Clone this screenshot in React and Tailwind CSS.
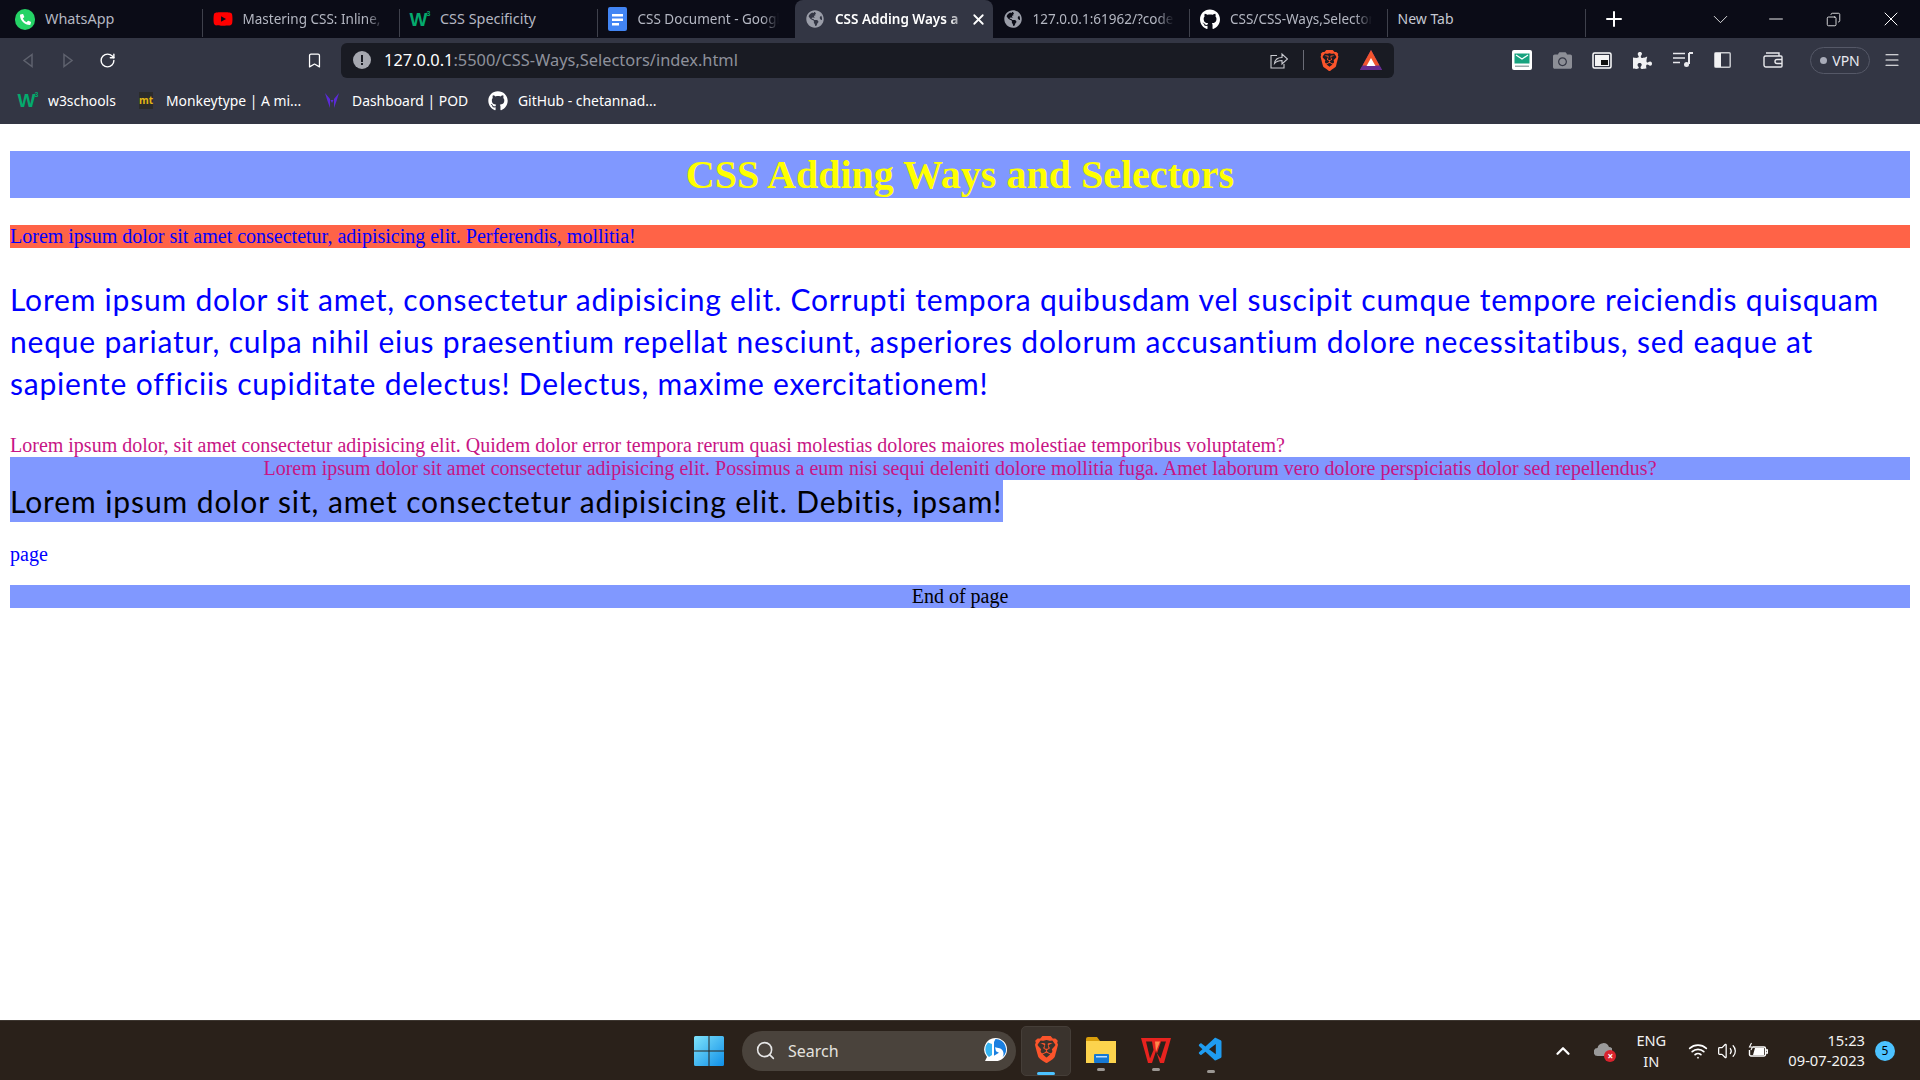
import React from "react";
import { FaGithub, FaYoutube, FaGlobeAmericas, FaPuzzlePiece, FaCamera, FaPhoneAlt } from "react-icons/fa";
import { SiBrave } from "react-icons/si";
import { VscVscode } from "react-icons/vsc";
import { X, Plus, ChevronDown, Minus, Copy, Bookmark, RotateCw, Search, ChevronUp, Wifi, Volume2, Menu } from "lucide-react";

const UI = "font-['Noto_Sans',sans-serif]";

function W3Icon() {
  return (
    <span className="flex items-start font-['Liberation_Sans',sans-serif] font-bold text-[#04aa6d] leading-none">
      <span className="text-[19px] tracking-[-1px]">W</span>
      <span className="text-[7px]">3</span>
    </span>
  );
}

function WhatsAppIcon() {
  return (
    <span className="w-[21px] h-[21px] rounded-full bg-[#25d366] flex items-center justify-center">
      <FaPhoneAlt size={11} className="text-white" />
    </span>
  );
}

function DocsIcon() {
  return (
    <svg width="19" height="24" viewBox="0 0 19 24">
      <path d="M2 0h15a2 2 0 0 1 2 2v20a2 2 0 0 1-2 2H2a2 2 0 0 1-2-2V2a2 2 0 0 1 2-2z" fill="#4285f4" />
      <path d="M4 7h11v2.5H4zM4 11.5h11V14H4zM4 16h7v2.5H4z" fill="#fff" />
    </svg>
  );
}

function Tab({ icon, title, active, fade }) {
  return (
    <div className={`w-[197.5px] h-full flex items-center shrink-0 pl-[10px] gap-[10px] overflow-hidden ${active ? "bg-[#333644] rounded-t-[8px] text-white font-semibold" : "text-[#b4b7c2]"}`}>
      <span className="w-[20px] flex justify-center shrink-0">{icon}</span>
      <span className={`whitespace-nowrap overflow-hidden flex-1 min-w-0 ${fade ? "text-[13.5px] [mask-image:linear-gradient(to_right,black_88%,transparent)]" : "text-[14.4px]"}`}>{title}</span>
      {active && <X size={17} strokeWidth={2.5} className="shrink-0 -ml-[6px] mr-[6px] text-white" />}
      {!active && <span className="w-[6px] shrink-0" />}
    </div>
  );
}

function Sep() {
  return <span className="w-px h-[28px] mt-[9px] bg-[#3f414c] shrink-0 -ml-px" />;
}

function Slot({ w, children }) {
  return <span className={`flex items-center justify-center shrink-0 h-[28px] ${w}`}>{children}</span>;
}

function BookmarkItem({ icon, label, w }) {
  return (
    <div className={`flex items-center shrink-0 ${w}`}>
      <span className="w-[24px] flex justify-center shrink-0">{icon}</span>
      <span className="ml-[8px] text-[13.9px] text-white whitespace-nowrap">{label}</span>
    </div>
  );
}

function BraveTriangle() {
  return (
    <svg width="22" height="20" viewBox="0 0 22 20">
      <path d="M11 0l11 20H0z" fill="#6b2d8f" />
      <path d="M11 0L2.5 15.5h17z" fill="#f2542d" />
      <path d="M11 8l4.5 8h-9z" fill="#fff" />
      <path d="M0 20l1.8-3.4h18.4L22 20z" fill="#662d91" />
    </svg>
  );
}

function Browser() {
  return (
    <div className={`${UI} shrink-0`}>
      {/* tab strip */}
      <div className="h-[38px] bg-[#0b0c17] flex items-stretch pl-[5px]">
        <Tab icon={<WhatsAppIcon />} title="WhatsApp" />
        <Sep />
        <Tab fade icon={<FaYoutube size={22} className="text-[#ff0000]" />} title="Mastering CSS: Inline, I" />
        <Sep />
        <Tab icon={<W3Icon />} title="CSS Specificity" />
        <Sep />
        <Tab fade icon={<DocsIcon />} title="CSS Document - Googl" />
        <Tab active fade icon={<FaGlobeAmericas size={18} className="text-[#9a9da8]" />} title="CSS Adding Ways a" />
        <Tab fade icon={<FaGlobeAmericas size={18} className="text-[#9a9da8]" />} title="127.0.0.1:61962/?code=" />
        <Sep />
        <Tab fade icon={<FaGithub size={21} className="text-white" />} title="CSS/CSS-Ways,Selector" />
        <Sep />
        <div className="w-[198px] h-full flex items-center pl-[10px] pb-[2px] text-[14px] text-[#c5c8d2] shrink-0">New Tab</div>
        <Sep />
        <div className="flex items-center text-white">
          <Slot w="w-[56px]"><Plus size={24} strokeWidth={2} /></Slot>
          <Slot w="w-[106px]"><ChevronDown size={25} strokeWidth={0.8} className="ml-[52px]" /></Slot>
          <Slot w="w-[57px]"><Minus size={22} strokeWidth={1} /></Slot>
          <Slot w="w-[57px]"><Copy size={15} strokeWidth={1.3} className="-scale-x-100" /></Slot>
          <Slot w="w-[58px]"><X size={24} strokeWidth={1} /></Slot>
        </div>
      </div>
      {/* toolbar */}
      <div className="h-[44px] bg-[#333644] flex items-center pl-[8px]">
        <Slot w="w-[40px]">
          <svg width="12" height="15" viewBox="0 0 12 15" fill="none" stroke="#5f626e" strokeWidth="1.5"><path d="M10 1.5L2 7.5l8 6z" /></svg>
        </Slot>
        <Slot w="w-[40px]">
          <svg width="12" height="15" viewBox="0 0 12 15" fill="none" stroke="#5f626e" strokeWidth="1.5"><path d="M2 1.5l8 6-8 6z" /></svg>
        </Slot>
        <Slot w="w-[38px]"><RotateCw size={17} strokeWidth={2} className="text-white" /></Slot>
        <Slot w="w-[40px] ml-[168px]"><Bookmark size={17} strokeWidth={1.8} className="text-white" /></Slot>
        <div className="ml-[7px] w-[1053px] h-[35px] bg-[#191b23] rounded-[6px] flex items-center shrink-0">
          <svg width="18" height="18" viewBox="0 0 18 18" className="ml-[12px] shrink-0">
            <circle cx="9" cy="9" r="9" fill="#a6a8b0" />
            <rect x="8" y="4" width="2" height="7" fill="#191b23" />
            <rect x="8" y="12" width="2" height="2" fill="#191b23" />
          </svg>
          <span className="ml-[13px] text-[16.4px] text-[#8e919b] whitespace-nowrap"><span className="text-white">127.0.0.1</span>:5500/CSS-Ways,Selectors/index.html</span>
          <span className="flex-1" />
          <svg width="18" height="18" viewBox="0 0 18 18" fill="none" stroke="#c9cad0" strokeWidth="1.1" className="shrink-0">
            <path d="M7 4.500H1v12.500h13v-4" />
            <path d="M4.500 12.500c.5-4 3.500-6 7.500-6V3l5.500 5-5.500 5v-3.500c-3 0-5.500.8-7.500 3z" />
          </svg>
          <span className="w-px h-[20px] bg-[#6a6c76] ml-[15px] mr-[15px] shrink-0" />
          <SiBrave size={21} className="text-[#fb542b] shrink-0" />
          <span className="ml-[20px] mr-[12px] flex"><BraveTriangle /></span>
        </div>
        <Slot w="w-[40px] ml-[108px]">
          <svg width="20" height="20" viewBox="0 0 20 20">
            <rect width="20" height="20" rx="2" fill="#fff" />
            <rect x="2.5" y="3.5" width="15" height="10" fill="#17a37f" />
            <path d="M4 5l6 4 6-4" fill="none" stroke="#fff" strokeWidth="1.2" />
            <rect x="3" y="15.5" width="14" height="1.5" fill="#9aa" />
          </svg>
        </Slot>
        <Slot w="w-[40px]"><FaCamera size={19} className="text-[#8c8e96]" /></Slot>
        <Slot w="w-[40px]">
          <svg width="20" height="17" viewBox="0 0 20 17">
            <rect x="1" y="1" width="18" height="15" rx="1.5" fill="#333644" stroke="#fff" strokeWidth="1.5" />
            <rect x="3" y="3" width="14" height="11" fill="#f4f4f4" />
            <rect x="9" y="8" width="7" height="5" fill="#111" />
          </svg>
        </Slot>
        <Slot w="w-[40px]"><FaPuzzlePiece size={19} className="text-[#f1f1f3]" /></Slot>
        <Slot w="w-[41px]">
          <svg width="20" height="16" viewBox="0 0 20 16" fill="none" stroke="#e8e8ec" strokeWidth="1.5">
            <path d="M0 1.5h12M0 6h12M0 10.5h7" />
            <path d="M16 1v11" strokeWidth="2" />
            <path d="M16 1h4" strokeWidth="2" />
            <circle cx="13.5" cy="12.5" r="2.5" fill="#e8e8ec" stroke="none" />
          </svg>
        </Slot>
        <Slot w="w-[39px]">
          <svg width="17" height="16" viewBox="0 0 17 16">
            <rect x="0.8" y="0.8" width="15.4" height="14.4" rx="1" fill="none" stroke="#c8c9ce" strokeWidth="1.5" />
            <rect x="1" y="1" width="6" height="14" fill="#f1f1f3" />
          </svg>
        </Slot>
        <Slot w="w-[62px]">
          <svg width="20" height="16" viewBox="0 0 20 16" fill="none" stroke="#e8e8ec" strokeWidth="1.4">
            <path d="M3 1h13v3M1 5a2 2 0 0 1 2-1h15a1 1 0 0 1 1 1v9a1 1 0 0 1-1 1H3a2 2 0 0 1-2-2z" />
            <path d="M19 7.5h-5a2 2 0 0 0 0 4h5" />
          </svg>
        </Slot>
        <div className="ml-[6px] w-[60px] h-[27px] rounded-full border border-[#555867] flex items-center justify-center gap-[5px] shrink-0">
          <span className="w-[7px] h-[7px] rounded-full bg-[#a8abb8]" />
          <span className="text-[14px] text-[#e8e9f0]">VPN</span>
        </div>
        <Slot w="w-[44px]"><Menu size={18} strokeWidth={1.5} className="text-white" /></Slot>
      </div>
      {/* bookmarks */}
      <div className="h-[42px] bg-[#333644] flex items-center pl-[16px] pb-[4px]">
        <BookmarkItem w="w-[118px]" icon={<W3Icon />} label="w3schools" />
        <BookmarkItem w="w-[186px]" icon={<span className="w-[14px] h-[17px] bg-[#2b2b2b] text-[#e2b714] text-[10px] font-bold flex items-center justify-center">mt</span>} label="Monkeytype | A mi..." />
        <BookmarkItem w="w-[166px]" icon={
          <svg width="14" height="15" viewBox="0 0 14 15" fill="#5b2bd6"><path d="M0 0l5 6v9L2.5 8zM14 0L9 6v9l2.5-7zM5.5 7h3L7 10z" /></svg>
        } label="Dashboard | POD" />
        <BookmarkItem w="w-[170px]" icon={<FaGithub size={20} className="text-white" />} label="GitHub - chetannad..." />
      </div>
    </div>
  );
}

function Page() {
  const comic = "font-['Lato',sans-serif]";
  return (
    <main className="flex-1 bg-white px-[10px] font-['Liberation_Serif',serif] text-[20px] leading-[23px] overflow-hidden">
      <h1 className="mt-[27px] h-[47px] bg-[#8098ff] text-center text-[40px] leading-[47px] font-bold text-[#ffff00]">CSS Adding Ways and Selectors</h1>
      <p className="mt-[27px] h-[23px] bg-[#ff6347] text-[#0000ff]">Lorem ipsum dolor sit amet consectetur, adipisicing elit. Perferendis, mollitia!</p>
      <p className={`mt-[30px] text-[30px] leading-[42px] tracking-[0.8px] text-[#0000ff] whitespace-nowrap ${comic}`}>
        Lorem ipsum dolor sit amet, consectetur adipisicing elit. Corrupti tempora quibusdam vel suscipit cumque tempore reiciendis quisquam<br />
        neque pariatur, culpa nihil eius praesentium repellat nesciunt, asperiores dolorum accusantium dolore necessitatibus, sed eaque at<br />
        sapiente officiis cupiditate delectus! Delectus, maxime exercitationem!
      </p>
      <p className="mt-[30px] h-[23px] text-[#c71585]">Lorem ipsum dolor, sit amet consectetur adipisicing elit. Quidem dolor error tempora rerum quasi molestias dolores maiores molestiae temporibus voluptatem?</p>
      <p className="h-[23px] bg-[#8098ff] text-center text-[#c71585]">Lorem ipsum dolor sit amet consectetur adipisicing elit. Possimus a eum nisi sequi deleniti dolore mollitia fuga. Amet laborum vero dolore perspiciatis dolor sed repellendus?</p>
      <p className={`w-[993px] h-[42px] bg-[#8098ff] text-[30px] leading-[42px] tracking-[0.9px] text-black whitespace-nowrap ${comic}`}>Lorem ipsum dolor sit, amet consectetur adipisicing elit. Debitis, ipsam!</p>
      <p className="mt-[21px] text-[#0000ff]">page</p>
      <p className="mt-[19px] h-[23px] bg-[#8098ff] text-center text-black">End of page</p>
    </main>
  );
}

function Taskbar() {
  return (
    <div className={`${UI} h-[60px] shrink-0 bg-[#2a211a] border-t border-[#3d3630] flex items-center text-white`}>
      <span className="ml-[694px] shrink-0">
        <svg width="30" height="30" viewBox="0 0 30 30" className="block">
          <defs>
            <linearGradient id="win" x1="0" y1="0" x2="1" y2="1">
              <stop offset="0" stopColor="#7fe3fb" />
              <stop offset="1" stopColor="#0f8fe8" />
            </linearGradient>
          </defs>
          <path d="M0 1.5A1.5 1.5 0 0 1 1.5 0h13v14.5H0zM15.5 0h13A1.5 1.5 0 0 1 30 1.5v13H15.5zM0 15.5h14.5V30h-13A1.5 1.5 0 0 1 0 28.5zM15.5 15.5H30v13a1.5 1.5 0 0 1-1.5 1.5h-13z" fill="url(#win)" />
        </svg>
      </span>
      <div className="ml-[18px] w-[274px] h-[40px] rounded-full bg-[#4a433c] flex items-center shrink-0">
        <Search size={21} strokeWidth={1.8} className="ml-[13px] text-[#e6e6e6] shrink-0" />
        <span className="ml-[12px] text-[16px] text-[#e4e2df]">Search</span>
        <span className="flex-1" />
        <svg width="25" height="27" viewBox="0 0 25 27" className="mr-[8px] shrink-0">
          <path d="M12.500 1a11.500 11.500 0 0 1 0 23H2l2-4a11.500 11.500 0 0 1 8.500-19z" fill="#fff" />
          <path d="M12.500 2a10.500 10.500 0 0 1 7 18.300c2-3 1-8-3-9l-4.500-1 1 4 3 1.500-5 3V5z" fill="#1a7fe0" />
          <path d="M5 5.500l4 1.500v11l-3 2a10 10 0 0 1-1-14.500z" fill="#35b4f2" />
        </svg>
      </div>
      <div className="ml-[5px] w-[50px] h-[50px] rounded-[5px] bg-[#3a332d] border border-[#453e38] flex flex-col items-center shrink-0">
        <SiBrave size={27} className="text-[#fb542b] mt-[9px]" />
        <span className="mt-[9px] w-[18px] h-[3px] rounded-full bg-[#4cc2ff]" />
      </div>
      <div className="ml-[5px] w-[50px] h-[50px] flex flex-col items-center shrink-0">
        <svg width="30" height="26" viewBox="0 0 30 26" className="mt-[11px]">
          <path d="M0 2a2 2 0 0 1 2-2h9l3 4H0z" fill="#d99e0b" />
          <rect y="4" width="30" height="22" fill="#fcd34d" />
          <rect x="8" y="17" width="15" height="9" rx="1" fill="#1679d4" />
          <rect x="10" y="19" width="11" height="1.5" fill="#bfe0ff" />
        </svg>
        <span className="mt-[5px] w-[8px] h-[3px] rounded-full bg-[#9b9793]" />
      </div>
      <div className="ml-[5px] w-[50px] h-[50px] flex flex-col items-center shrink-0">
        <svg width="30" height="26" viewBox="0 0 30 26" className="mt-[11px]">
          <path d="M0 1h30l-7 25h-4l-4-12-4 12H7z" fill="#e8231f" />
          <path d="M5 4.500h6l1.500 8.500L9 21.500zM25 4.500h-5l-4 12 3.500 5z" fill="#2a211a" />
          <path d="M14 4.500h5l-4 10z" fill="#ff8a4c" />
        </svg>
        <span className="mt-[5px] w-[8px] h-[3px] rounded-full bg-[#9b9793]" />
      </div>
      <div className="ml-[5px] w-[50px] h-[50px] flex flex-col items-center shrink-0">
        <VscVscode size={28} className="text-[#1f9cf0] mt-[10px]" />
        <span className="mt-[6px] w-[8px] h-[3px] rounded-full bg-[#9b9793]" />
      </div>
      <span className="flex-1" />
      <ChevronUp size={22} strokeWidth={2.5} className="text-white shrink-0" />
      <span className="relative ml-[20px] w-[18px] h-[18px] shrink-0">
        <svg width="18" height="14" viewBox="0 0 18 14" className="mt-[1px]"><path d="M4 13a4 4 0 0 1-.5-8A6 6 0 0 1 15 4a4.500 4.500 0 0 1 0 9z" fill="#9a9a9a" /></svg>
        <span className="absolute -right-[4px] -bottom-[2px] w-[12px] h-[12px] rounded-full bg-[#d9232e] text-white text-[10px] leading-[12px] text-center font-bold">×</span>
      </span>
      <div className="ml-[21px] w-[36px] text-center text-[14.6px] leading-[21px] shrink-0 text-[#f2f2f2]">ENG<br />IN</div>
      <Wifi size={20} strokeWidth={2} className="ml-[19px] shrink-0" />
      <Volume2 size={20} strokeWidth={1.5} className="ml-[9px] shrink-0" />
      <svg width="20" height="18" viewBox="0 0 20 18" fill="none" stroke="#fff" strokeWidth="1.4" className="ml-[11px] shrink-0">
        <path d="M5 5h11a1.500 1.500 0 0 1 1.500 1.500v6A1.500 1.500 0 0 1 16 14H3a1.500 1.500 0 0 1-1.500-1.500V8" />
        <path d="M17.500 8h2v3h-2" />
        <path d="M7 6h9v7H5z" fill="#fff" stroke="none" />
        <path d="M3.500 1L1.500 5h3L3 8" strokeWidth="1.1" />
      </svg>
      <div className="ml-[20px] -mt-[1px] text-right text-[14.7px] leading-[20px] shrink-0 text-[#f2f2f2]">15:23<br />09-07-2023</div>
      <span className="ml-[10px] mr-[25px] w-[20px] h-[20px] rounded-full bg-[#4cc2ff] text-black text-[12px] leading-[20px] text-center shrink-0">5</span>
    </div>
  );
}

export default function App() {
  return (
    <div className="h-screen flex flex-col overflow-hidden">
      <Browser />
      <Page />
      <Taskbar />
    </div>
  );
}
